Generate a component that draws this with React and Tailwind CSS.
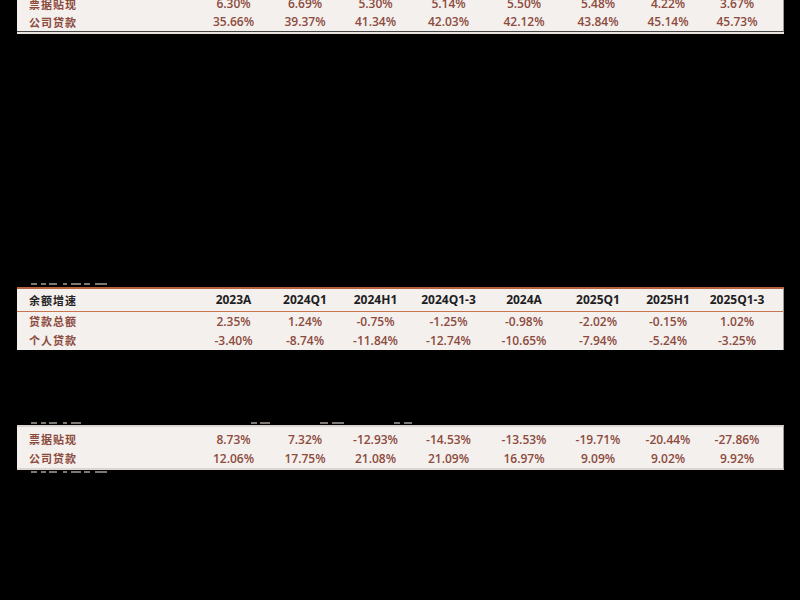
const cols = "grid grid-cols-[180px_73px_70px_71px_75px_76px_72px_68px_70px_1fr] items-center";
const num = "text-center text-[12px] font-semibold text-[#8c4b3d] [font-family:'Open_Sans',sans-serif]";
const label = "pl-[12px] text-[11px] font-bold text-[#8c4b3d] tracking-[1px] [font-family:'Noto_Sans_CJK_SC',sans-serif]";

function Row({ name, values, h = "h-[18px]" }) {
  return (
    <div className={`${cols} ${h}`}>
      <div className={label}>{name}</div>
      {values.map((v, i) => (
        <div key={i} className={num}>{v}</div>
      ))}
      <div />
    </div>
  );
}

// clipped tops of neighbouring rows
function Fragment({ className = "", bits }) {
  return (
    <div className={`flex h-[2px] ${className}`}>
      {bits.map(([gap, w], i) => (
        <div key={i} className="bg-[#7d7774]" style={{ marginLeft: gap, width: w }} />
      ))}
    </div>
  );
}

const bitsA = [[14, 6], [4, 5], [3, 8], [6, 4], [4, 10], [3, 6], [5, 12]];
const bitsB = [[14, 6], [4, 5], [3, 8], [6, 4], [4, 10], [170, 6], [3, 10], [50, 8], [4, 12], [50, 6], [4, 8]];

export default function App() {
  const headers = ["2023A", "2024Q1", "2024H1", "2024Q1-3", "2024A", "2025Q1", "2025H1", "2025Q1-3"];
  return (
    <div className="w-[800px] h-[600px] bg-black overflow-hidden">
      <div className="ml-[17px] w-[767px] flex flex-col">
        {/* panel 1 */}
        <div className="-mt-[5px] bg-[#f4f0ee] border-r border-[#9a9a9a] border-b border-b-[#444]">
          <Row name="票据贴现" values={["6.30%", "6.69%", "5.30%", "5.14%", "5.50%", "5.48%", "4.22%", "3.67%"]} />
          <Row name="公司贷款" values={["35.66%", "39.37%", "41.34%", "42.03%", "42.12%", "43.84%", "45.14%", "45.73%"]} />
        </div>
        <div className="h-[2px] bg-[#e8e4e2]" />

        {/* panel 2 */}
        <Fragment className="mt-[249px]" bits={bitsA} />
        <div className="mt-[2px] bg-[#f4f0ee] border-t-2 border-[#b7613f] border-r border-r-[#9a9a9a]">
          <div className={`${cols} h-[23px] border-b border-[#c8744f]`}>
            <div className="pl-[12px] text-[11px] font-bold text-[#222] tracking-[1px] [font-family:'Noto_Sans_CJK_SC',sans-serif]">余额增速</div>
            {headers.map((h) => (
              <div key={h} className="text-center text-[12px] font-bold text-[#1e1e1e] [font-family:'Open_Sans',sans-serif]">{h}</div>
            ))}
            <div />
          </div>
          <Row name="贷款总额" values={["2.35%", "1.24%", "-0.75%", "-1.25%", "-0.98%", "-2.02%", "-0.15%", "1.02%"]} h="h-[19px]" />
          <Row name="个人贷款" values={["-3.40%", "-8.74%", "-11.84%", "-12.74%", "-10.65%", "-7.94%", "-5.24%", "-3.25%"]} h="h-[19px]" />
        </div>

        {/* panel 3 */}
        <Fragment className="mt-[72px]" bits={bitsB} />
        <div className="mt-[1px] bg-[#f4f0ee] border-t-2 border-t-[#d9d4d1] border-r border-r-[#9a9a9a] border-b-2 border-b-[#dcd6d3] pt-[3px]">
          <Row name="票据贴现" values={["8.73%", "7.32%", "-12.93%", "-14.53%", "-13.53%", "-19.71%", "-20.44%", "-27.86%"]} h="h-[19px]" />
          <Row name="公司贷款" values={["12.06%", "17.75%", "21.08%", "21.09%", "16.97%", "9.09%", "9.02%", "9.92%"]} h="h-[19px]" />
        </div>
        <Fragment className="mt-[1px]" bits={bitsA} />
      </div>
    </div>
  );
}
